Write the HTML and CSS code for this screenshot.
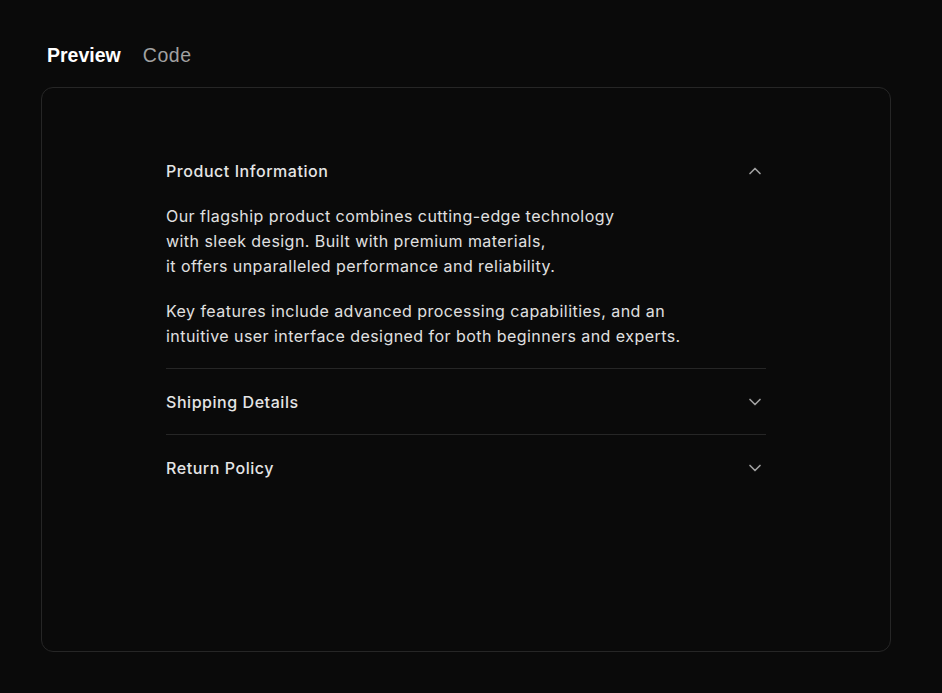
FILE: index.html
```html
<!DOCTYPE html>
<html lang="en">
<head>
<meta charset="utf-8">
<title>Accordion Preview</title>
<link rel="stylesheet" href="styles.css">
</head>
<body>
<div class="page">
  <nav class="tabs">
    <span class="tab active">Preview</span>
    <span class="tab">Code</span>
  </nav>
  <section class="card">
    <div class="accordion">
      <div class="item open">
        <div class="trigger">
          <span>Product Information</span>
          <svg class="chev" viewBox="0 0 24 24" width="20" height="20" fill="none" stroke="currentColor" stroke-width="2" stroke-linecap="round" stroke-linejoin="round"><path d="m18 15-6-6-6 6"/></svg>
        </div>
        <div class="content">
          <p>Our flagship product combines cutting-edge technology<br>with sleek design. Built with premium materials,<br>it offers unparalleled performance and reliability.</p>
          <p>Key features include advanced processing capabilities, and an<br>intuitive user interface designed for both beginners and experts.</p>
        </div>
      </div>
      <div class="item">
        <div class="trigger">
          <span>Shipping Details</span>
          <svg class="chev" viewBox="0 0 24 24" width="20" height="20" fill="none" stroke="currentColor" stroke-width="2" stroke-linecap="round" stroke-linejoin="round"><path d="m6 9 6 6 6-6"/></svg>
        </div>
      </div>
      <div class="item last">
        <div class="trigger">
          <span>Return Policy</span>
          <svg class="chev" viewBox="0 0 24 24" width="20" height="20" fill="none" stroke="currentColor" stroke-width="2" stroke-linecap="round" stroke-linejoin="round"><path d="m6 9 6 6 6-6"/></svg>
        </div>
      </div>
    </div>
  </section>
</div>
</body>
</html>
```
FILE: styles.css
```css
* { box-sizing: border-box; }
html, body {
  margin: 0;
  padding: 0;
  background: #0a0a0a;
}
body {
  font-family: "Inter", "Liberation Sans", sans-serif;
  color: #e5e5e5;
}
.page {
  padding: 41px 51px 0 41px;
}
.tabs {
  display: flex;
  gap: 22px;
  padding-left: 6px;
  height: 46px;
  align-items: flex-start;
}
.tab {
  font-family: "Liberation Sans", Arial, sans-serif;
  font-size: 19.5px;
  line-height: 28px;
  color: #a1a1a1;
  letter-spacing: 0.6px;
}
.tab.active {
  color: #ffffff;
  font-weight: 700;
  letter-spacing: 0;
}
.card {
  width: 850px;
  height: 565px;
  border: 1px solid #262626;
  border-radius: 12px;
  padding-top: 50px;
  display: flex;
  justify-content: center;
}
.accordion {
  width: 600px;
}
.item {
  border-bottom: 1px solid #262626;
}
.item.last {
  border-bottom: none;
}
.trigger {
  display: flex;
  align-items: center;
  justify-content: space-between;
  padding: 21px 0 19px;
  font-size: 16px;
  line-height: 25px;
  font-weight: 500;
  letter-spacing: 0.55px;
  color: #e5e5e5;
}
.chev {
  color: #a1a1a1;
  flex: none;
  margin-right: 1px;
  margin-bottom: 2px;
}
.content {
  padding-top: 1px;
  padding-bottom: 19px;
  font-size: 16px;
  line-height: 25px;
  letter-spacing: 0.45px;
  color: #e0e0e0;
}
.content p {
  margin: 0 0 20px;
}
.content p:last-child {
  margin-bottom: 0;
}
```
